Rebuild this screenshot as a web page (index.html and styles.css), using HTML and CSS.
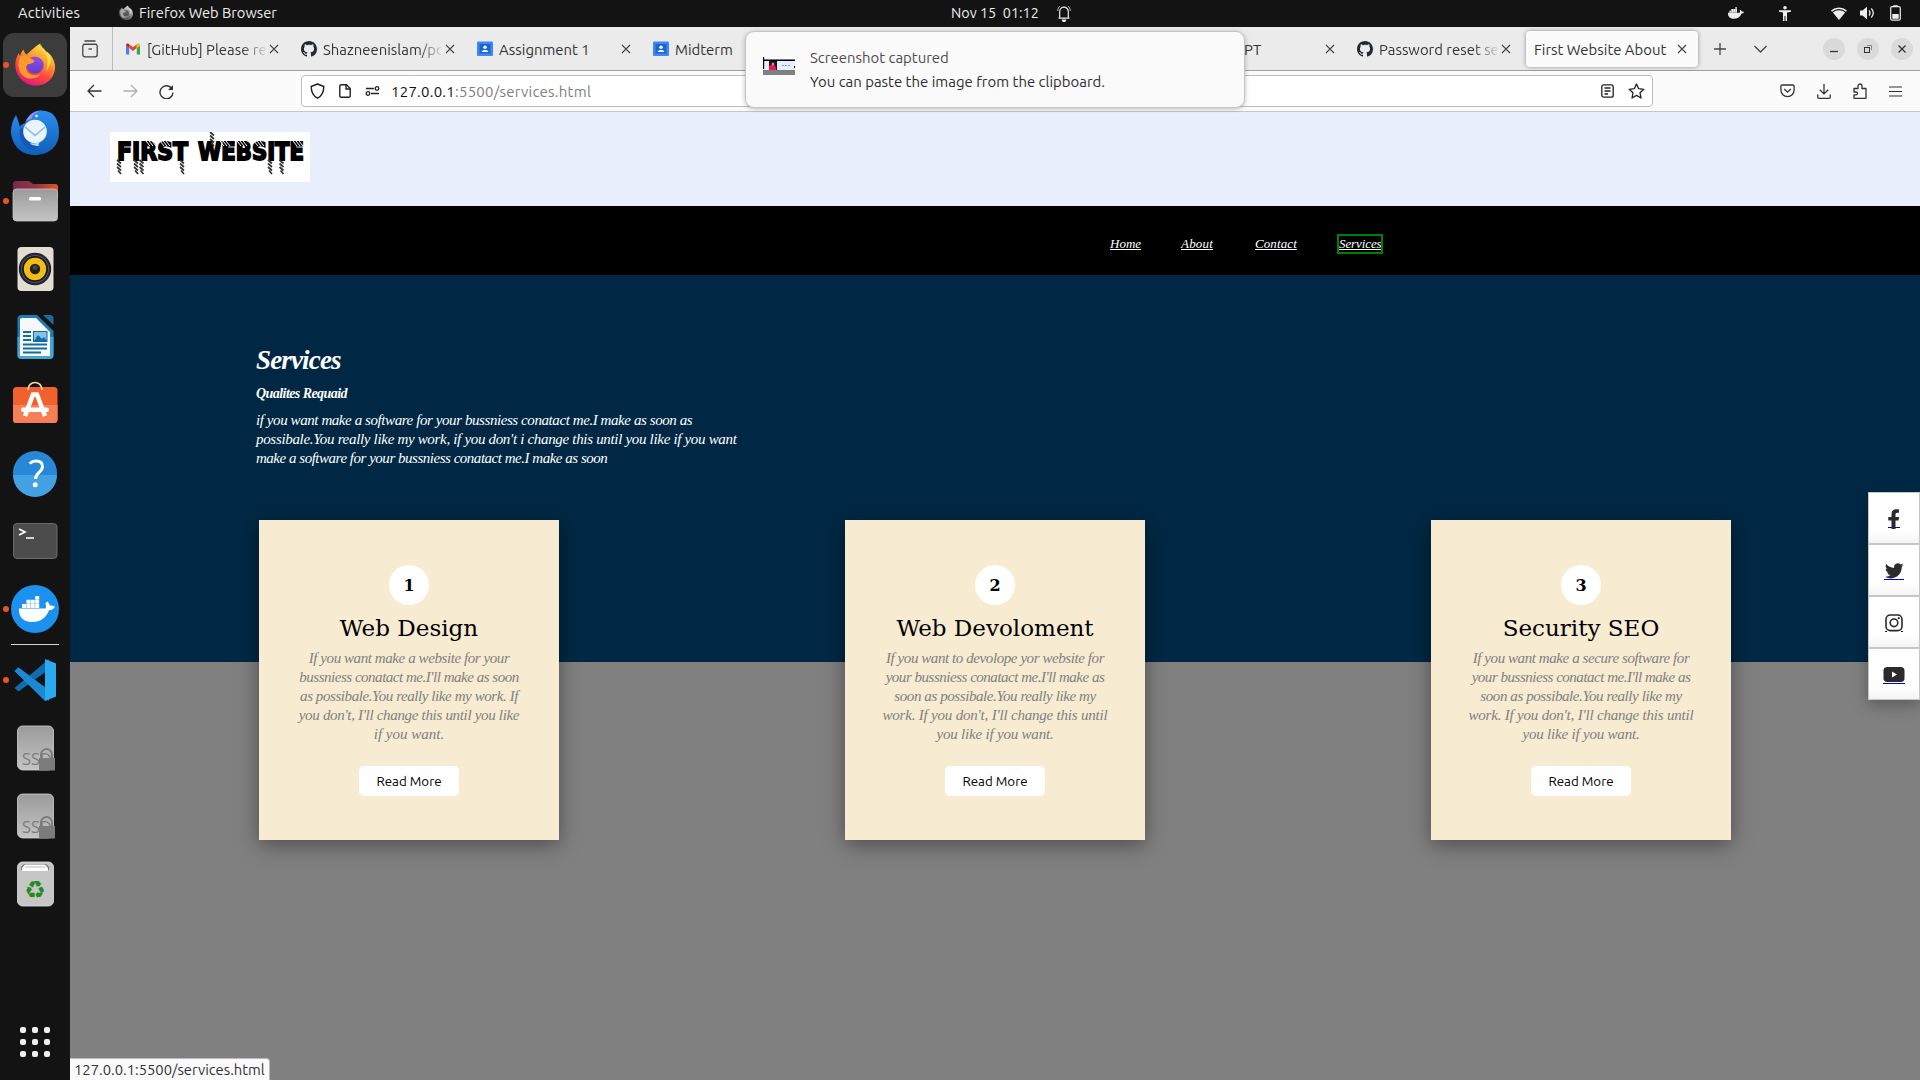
FILE: index.html
```html
<!DOCTYPE html>
<html lang="en">
<head>
<meta charset="utf-8">
<title>First Website About</title>
<link rel="stylesheet" href="styles.css">
</head>
<body>
<svg width="0" height="0" class="defs" aria-hidden="true">
  <defs>
    <linearGradient id="fx" x1=".8" y1="0" x2=".3" y2="1"><stop offset="0" stop-color="#fff04a"/><stop offset=".35" stop-color="#ffa32b"/><stop offset=".65" stop-color="#ff4a3d"/><stop offset="1" stop-color="#e3157e"/></linearGradient>
    <linearGradient id="fp" x1="0" y1="0" x2="0" y2="1"><stop offset="0" stop-color="#9a4be8"/><stop offset="1" stop-color="#5b40c8"/></linearGradient>
    <linearGradient id="tb" x1="0" y1="0" x2="0" y2="1"><stop offset="0" stop-color="#2b8df0"/><stop offset="1" stop-color="#0f5fb8"/></linearGradient>
    <linearGradient id="gr" x1="0" y1="0" x2="0" y2="1"><stop offset="0" stop-color="#9b9b9b"/><stop offset="1" stop-color="#c4c4c4"/></linearGradient>
    <linearGradient id="fold" x1="0" y1="0" x2="1" y2="0"><stop offset="0" stop-color="#742a4e"/><stop offset=".55" stop-color="#9c3540"/><stop offset="1" stop-color="#e95420"/></linearGradient>
    <symbol id="close" viewBox="0 0 10 10"><path d="M1 1l8 8M9 1L1 9" stroke="#444" stroke-width="1.1" fill="none"/></symbol>
    <symbol id="github" viewBox="0 0 16 16"><path fill="#24292f" d="M8 0C3.58 0 0 3.58 0 8c0 3.54 2.29 6.53 5.47 7.59.4.07.55-.17.55-.38 0-.19-.01-.82-.01-1.49-2.01.37-2.53-.49-2.69-.94-.09-.23-.48-.94-.82-1.13-.28-.15-.68-.52-.01-.53.63-.01 1.08.58 1.23.82.72 1.21 1.87.87 2.33.66.07-.52.28-.87.51-1.07-1.78-.2-3.64-.89-3.64-3.95 0-.87.31-1.59.82-2.15-.08-.2-.36-1.02.08-2.12 0 0 .67-.21 2.2.82A7.6 7.6 0 0 1 8 3.86c.68 0 1.36.09 2 .27 1.53-1.04 2.2-.82 2.2-.82.44 1.1.16 1.92.08 2.12.51.56.82 1.27.82 2.15 0 3.07-1.87 3.75-3.65 3.95.29.25.54.73.54 1.48 0 1.07-.01 1.93-.01 2.2 0 .21.15.46.55.38A8.01 8.01 0 0 0 16 8c0-4.42-3.58-8-8-8z"/></symbol>
    <symbol id="room" viewBox="0 0 16 16"><rect width="16" height="14.5" y=".5" rx="1" fill="#4285f4"/><rect x="2.5" y="3" width="11" height="9.5" fill="#1766d8"/><circle cx="8" cy="6.2" r="1.7" fill="#fff"/><path d="M4.7 11c.3-2.6 6.300-2.600 6.600 0z" fill="#fff"/></symbol>
    <symbol id="ssd" viewBox="0 0 48 48"><rect x="6.500" y="2" width="36" height="44" rx="5" fill="url(#gr)" stroke="#d0d0d0" stroke-width=".8"/><text x="11" y="41" class="ssd-text">SSD</text><path d="M30 34v-3.500a5.500 5.500 0 0 1 11 0V34" fill="none" stroke="#7c7c7c" stroke-width="2"/><rect x="28" y="34" width="16" height="12.500" fill="#7c7c7c"/></symbol>
    <symbol id="whale" viewBox="0 0 36 28"><path d="M0 12.500h26.500c.8-1.300 .8-3-.2-5l2-2c1.500 1.200 2.300 2.700 2.500 4.200 1.800-.3 3.500 0 5.200 1-1.200 2.300-3.200 3.400-6 3.600C27.500 21.500 22 26 13 26 5 26-.5 22 0 12.500zM3 8h4v4H3zM7.400 8h4v4h-4zM11.800 8h4v4h-4zM16.200 8h4v4h-4zM7.400 3.700h4v4h-4zM11.800 3.700h4v4h-4zM16.200 3.700h4v4h-4zM16.200 0h4v3.400h-4z"/></symbol>
    <symbol id="fox" viewBox="0 0 48 48"><path fill="url(#fx)" d="M3.500 24c0-6 2-9 3.500-12.500.4 1.500.8 2.500 1.500 3 .5-2.500 1.500-4.700 3.700-6.800.3 2.600 1.500 4.300 3 5.300C19 10 24 4.500 29.500 1.500c.3 5 4 6.500 6 11 .5-1 .5-1.500.5-2.500C41 13 45 20 45 26 45 37 36.500 45.500 25 45.500S3.500 36 3.500 24z"/><path fill="#ffe14d" d="M30 2c-.5 5 3.500 7 6 12 1.500 4 2 11-1 17 8-10 6-18 1-20.500-2-3.500-5-4.500-6-8.500z"/><circle cx="24" cy="24" r="9" fill="url(#fp)"/><path fill="#ff9b2b" d="M9 15c3-1 6-1 8 1l6 3c1 2-3 4-6 4-3 2-3 5-1 8 3 4 9 5 14 2-5 7-17 7-21-1-3-5-3-12 0-17z"/></symbol>
    <path id="drip" d="M-2 0l4 3.500M-2 3.500l4 3.500M-2 7l4 3.500M-1 10.500l3 3.500"/>
    <path id="hatch" d="M0 0l4 5M3 0l4 5M6 0l4 5"/>
  </defs>
</svg>

<header class="topbar">
  <span class="ui activities">Activities</span>
  <div class="app-name"><svg class="app-fox" viewBox="0 0 48 48"><use href="#fox"/></svg><span class="ui firefox">Firefox Web Browser</span></div>
  <div class="clock"><span class="ui time">Nov 15&nbsp; 01:12</span><svg width="14" height="17" viewBox="0 0 14 17" fill="none" stroke="#ededed" stroke-width="1.200"><path d="M1.500 13.200h11M2.700 13V6.500a4.300 4.300 0 0 1 8.600 0V13"/><path d="M.7 6c0-2 .7-3.500 2.200-4.800M13.300 6c0-2-.7-3.500-2.200-4.800" stroke-width=".8"/><path d="M5.500 15a1.500 1.500 0 0 0 3 0z" fill="#ededed"/></svg></div>
  <div class="tray">
    <svg class="t-docker" width="16" height="13" fill="#ededed"><use href="#whale"/></svg>
    <svg class="t-access" width="12" height="15" viewBox="0 0 12 15" fill="#ededed"><circle cx="6" cy="1.800" r="1.800"/><path d="M0 4.200h12v1.600L8 6.400V15H6.500v-5h-1v5H4V6.400L0 5.800z"/></svg>
    <svg class="t-wifi" width="16" height="13" viewBox="0 0 16 13"><path d="M0 3.500a12 12 0 0 1 16 0l-1 1.200a10.500 10.500 0 0 0-14 0z" fill="#ededed"/><path d="M1.800 5.600a9.500 9.500 0 0 1 12.400 0L8 13z" fill="#ededed"/></svg>
    <svg class="t-vol" width="15" height="14" viewBox="0 0 15 14"><path d="M0 4.500h2.500L7 .7v12.600L2.500 9.500H0z" fill="#ededed"/><path d="M9 4.500q2 2.500 0 5M11.300 2.500q4 4.500 0 9" fill="none" stroke="#ededed" stroke-width="1.300"/></svg>
    <svg class="t-bat" width="11" height="16" viewBox="0 0 11 16"><path d="M3.500 1.500V.7h4v.8" fill="none" stroke="#ededed"/><rect x=".7" y="1.700" width="9.600" height="13.500" rx="1.500" fill="none" stroke="#ededed" stroke-width="1.200"/><path d="M2.300 9h6.400v4.800H2.300z" fill="#ededed"/></svg>
  </div>
</header>

<div class="desktop">
  <nav class="dock">
    <div class="slot running active"><svg viewBox="0 0 48 48"><use href="#fox"/></svg></div>
    <div class="slot"><svg viewBox="0 0 48 48"><path fill="url(#tb)" d="M5 6C1 12-1 20 .5 27 3 39 12 46 24 46c14 0 24-9 24-22 0-10-3-17-8-20-5-3-15-4-20 1-3 3-5 6-6 9-3 1-4 2-5 4-1-4-2-7-4-12z"/><path fill="#1558b5" d="M12 18c0 10 4 17 16 19-2 2-5 3-8 3C12 38 7 30 9 20z"/><path fill="#a58ef5" d="M15 12C17 7 22 3 28 2c-2 2-7 3-7 7-1 1-3 2-6 3z"/><circle cx="25.500" cy="7" r="1.300" fill="#fff"/><circle cx="24" cy="22.500" r="11.800" fill="#e9f4ff"/><path d="M19 34c4 1 8 0 10-1-2 2-2 4 0 4-4 0-8 0-10-3z" fill="#b9ddfb"/><path d="M14 18l10 8.500L34 18" fill="none" stroke="#85b9ec" stroke-width="1.600"/></svg></div>
    <div class="slot running"><svg viewBox="0 0 48 48"><path d="M2 7a3 3 0 0 1 3-3h13l4 3h22a3 3 0 0 1 3 3v10H2z" fill="url(#fold)"/><rect x="2" y="12" width="44.500" height="32" rx="3.500" fill="url(#gr)" stroke="#c4c4c4" stroke-width=".8"/><rect x="18" y="20" width="12" height="3.500" rx="1.500" fill="#fff"/></svg></div>
    <div class="slot"><svg viewBox="0 0 48 48"><rect x="6.500" y="2" width="36" height="44" rx="4" fill="#e2ded4"/><circle cx="24" cy="24" r="16.200" fill="#24242e"/><circle cx="24" cy="24" r="14" fill="#555565"/><circle cx="24" cy="24" r="13" fill="#17171c"/><circle cx="24" cy="24" r="11.200" fill="#f0bd16"/><circle cx="24" cy="24" r="5.200" fill="#202020"/><circle cx="24" cy="22.500" r="2.500" fill="#444"/></svg></div>
    <div class="slot"><svg viewBox="0 0 48 48"><path d="M10 2h16l16.500 16v24a4 4 0 0 1-4 4h-28a4 4 0 0 1-4-4V6a4 4 0 0 1 3.500-4z" fill="#1b7db5"/><path d="M6.500 24h36v18a4 4 0 0 1-4 4h-28a4 4 0 0 1-4-4z" fill="#45a4d3"/><path d="M11 5h14l14 14v24H9V7a2 2 0 0 1 2-2z" fill="#f8f8f8"/><path d="M32 2h7a3.500 3.500 0 0 1 3.500 3.500V12z" fill="#1a6d9c"/><path d="M12 19h8M12 23h8M12 27h8M12 31.500h24M12 35.500h24M12 39.500h18" stroke="#116ba1" stroke-width="1.800"/><rect x="22.500" y="18.500" width="13.500" height="10" fill="#7fc4e8" stroke="#116ba1"/><path d="M23 28l4-6 4 4 2-2 3 4z" fill="#116ba1"/></svg></div>
    <div class="slot"><svg class="software" viewBox="0 0 48 48"><rect x="2" y="8" width="44.500" height="36" rx="3.500" fill="#f0612e"/><path d="M2 26h44.500v14.500a3.500 3.500 0 0 1-3.500 3.500H5.500A3.500 3.500 0 0 1 2 40.500z" fill="#f58055"/><path d="M17 11c0-10 14-10 14 0" fill="none" stroke="#f6d9a6" stroke-width="1.700"/><path d="M14 37l8-21.500h4L34 37" fill="none" stroke="#fff" stroke-width="4.500"/><rect x="10" y="28.500" width="28" height="4.500" rx="2.200" fill="#fff"/></svg></div>
    <div class="slot"><svg class="help" viewBox="0 0 48 48"><circle cx="24" cy="24" r="22" fill="#2688d6"/><path d="M2 26a22 22 0 0 0 44 0z" fill="#43a2e3"/><path d="M18.500 14.500c2-1.800 4-2.500 6.500-2.500 4 0 6.500 2 6.500 5.500 0 6-7 6-7 12.500" fill="none" stroke="#fff" stroke-width="3"/><circle cx="24.200" cy="35.700" r="2.500" fill="#fff"/></svg></div>
    <div class="slot"><svg viewBox="0 0 48 48"><rect x="2.500" y="6.500" width="43.500" height="35" rx="3.500" fill="#4c4c4c" stroke="#6a6a6a" stroke-width="1"/><path d="M8 12l6 3-6 3M15 21h8" fill="none" stroke="#fff" stroke-width="1.700"/></svg></div>
    <div class="slot running"><svg viewBox="0 0 48 48"><circle cx="24" cy="24" r="24" fill="#1d91ef"/><svg x="8" y="11" width="36" height="28" fill="#fff"><use href="#whale"/></svg></svg></div>
    <div class="divider"></div>
    <div class="slot running"><svg viewBox="0 0 48 48"><path d="M3.500 15l4-3.500L38 34v11z" fill="#1580c8"/><path d="M3.500 32l4 3.500L38 13.500V3z" fill="#0f6cb0"/><path d="M34 3l11 4.500v33L34 45z" fill="#29aaf2"/><path d="M3.500 15l4-3.500L34 32v13z" fill="#1b8ad3"/></svg></div>
    <div class="slot"><svg><use href="#ssd"/></svg></div>
    <div class="slot"><svg><use href="#ssd"/></svg></div>
    <div class="slot"><svg viewBox="0 0 48 48"><rect x="6.500" y="2" width="36" height="44" rx="5" fill="#c6c6c6" stroke="#e2e2e2" stroke-width=".8"/><path d="M10 10V7l3-3h22l3 3v3z" fill="#777"/><path d="M11 11V8l3-3.500h20L37 8v3z" fill="#fff"/><path d="M14 7h20" stroke="#aaa" stroke-width=".8"/><text x="24" y="38" class="recycle">♻</text></svg></div>
    <div class="apps"><i></i><i></i><i></i><i></i><i></i><i></i><i></i><i></i><i></i></div>
  </nav>

  <main class="browser">
    <div class="tabstrip">
      <div class="view"><svg width="16" height="18" viewBox="0 0 16 18" fill="none" stroke="#444" stroke-width="1.300"><path d="M2.500 1h11M1 4.300h14"/><rect x=".8" y="4.300" width="14.400" height="12.500" rx="2"/><path d="M6.500 9h3.500"/></svg></div>
      <div class="tabs">
        <div class="tab"><svg class="fav" viewBox="0 0 16 16"><path d="M1 13.500h3.200V7L1 4.500z" fill="#4285f4"/><path d="M11.800 13.500H15v-9L11.800 7z" fill="#34a853"/><path d="M4.200 7V3.300L8 6.200l3.800-2.900V7L8 10z" fill="#ea4335"/><path d="M1 4.500V4c0-1.500 1.500-2 2.500-1.200l.7.500V7z" fill="#c5221f"/><path d="M15 4.500V4c0-1.500-1.500-2-2.500-1.200l-.7.500V7z" fill="#fbbc04"/></svg><span class="ui label fade">[GitHub] Please re</span><svg class="x"><use href="#close"/></svg></div>
        <div class="tab"><svg class="fav"><use href="#github"/></svg><span class="ui label fade">Shazneenislam/po</span><svg class="x"><use href="#close"/></svg></div>
        <div class="tab"><svg class="fav"><use href="#room"/></svg><span class="ui label">Assignment 1</span><svg class="x"><use href="#close"/></svg></div>
        <div class="tab"><svg class="fav"><use href="#room"/></svg><span class="ui label">Midterm</span></div>
        <div class="tab"></div>
        <div class="tab"></div>
        <div class="tab"><span class="fav"></span><span class="ui label">ChatGPT</span><svg class="x"><use href="#close"/></svg></div>
        <div class="tab"><svg class="fav"><use href="#github"/></svg><span class="ui label fade">Password reset se</span><svg class="x"><use href="#close"/></svg></div>
        <div class="tab current"><span class="ui label">First Website About</span><svg class="x"><use href="#close"/></svg></div>
      </div>
      <svg class="plus" width="12" height="12" viewBox="0 0 12 12" stroke="#444" stroke-width="1.300"><path d="M6 0v12M0 6h12"/></svg>
      <svg class="chev" width="13" height="8" viewBox="0 0 13 8" fill="none" stroke="#444" stroke-width="1.300"><path d="M.5 1l6 6 6-6"/></svg>
      <div class="winbtns">
        <span><svg viewBox="0 0 10 10"><path d="M1 7.500h8" stroke="#333" stroke-width="1.300"/></svg></span>
        <span><svg viewBox="0 0 10 10" fill="none" stroke="#333"><rect x="1.500" y="3.500" width="5" height="5"/><path d="M4 1.500h4.500V6" stroke="#888"/></svg></span>
        <span><svg viewBox="0 0 10 10"><path d="M1.500 1.500l7 7M8.500 1.500l-7 7" stroke="#333" stroke-width="1.300"/></svg></span>
      </div>
    </div>

    <div class="toolbar">
      <div class="navbtns">
        <svg width="15" height="14" viewBox="0 0 15 14" fill="none" stroke="#333" stroke-width="1.300"><path d="M14.500 7H1.200M7 1L1 7l6 6"/></svg>
        <svg width="15" height="14" viewBox="0 0 15 14" fill="none" stroke="#b0b0b0" stroke-width="1.300"><path d="M.5 7h13.300M8 1l6 6-6 6"/></svg>
        <svg width="15" height="15" viewBox="0 0 15 15" fill="none" stroke="#333" stroke-width="1.400"><path d="M12.800 4.500A6.500 6.500 0 1 0 14 8.500"/><path d="M14 1v5H9z" fill="#333" stroke="none"/></svg>
      </div>
      <div class="urlbar">
        <svg width="15" height="16" viewBox="0 0 15 16" fill="none" stroke="#222" stroke-width="1.400"><path d="M7.500 1l6.300 2.500c0 6-2 9.500-6.300 11.700C3.200 13 1.200 9.500 1.200 3.500z" stroke-linejoin="round"/></svg>
        <svg width="12" height="14" viewBox="0 0 12 14" fill="none" stroke="#222" stroke-width="1.400"><path d="M.8 2A1.200 1.200 0 0 1 2 .8h5.500l3.700 3.700V12a1.200 1.200 0 0 1-1.200 1.200H2A1.200 1.200 0 0 1 .8 12z"/><path d="M7 1v4h4"/></svg>
        <svg width="15" height="10" viewBox="0 0 15 10" fill="none" stroke="#222" stroke-width="1.300"><path d="M1 2.500h8M6 7.500h8"/><circle cx="12" cy="2.500" r="1.800"/><circle cx="3" cy="7.500" r="1.800"/></svg>
        <span class="ui url"><b>127.0.0.1</b>:5500/services.html</span>
        <svg class="reader" width="13" height="14" viewBox="0 0 13 14" fill="none" stroke="#222" stroke-width="1.300"><rect x=".8" y=".8" width="11.400" height="12.400" rx="2"/><path d="M3.500 4h6M3.500 7h6M3.500 10h3.500"/></svg>
        <svg width="17" height="16" viewBox="0 0 17 16" fill="none" stroke="#222" stroke-width="1.300" stroke-linejoin="round"><path d="M8.500 1l2.200 4.700 5.100.6-3.800 3.500 1 5.200-4.500-2.600L4 15l1-5.200L1.200 6.300l5.100-.6z"/></svg>
      </div>
      <div class="tools">
        <svg width="15" height="14" viewBox="0 0 15 14" fill="none" stroke="#333" stroke-width="1.300"><path d="M2.200 1h10.600c.8 0 1.300.5 1.300 1.300V6a6.600 6.600 0 0 1-13.200 0V2.300C.9 1.500 1.400 1 2.200 1zM4.300 5l3.200 3.200L10.700 5"/></svg>
        <svg width="14" height="15" viewBox="0 0 14 15" fill="none" stroke="#333" stroke-width="1.300"><path d="M7 0v9.500M2.800 5.700L7 9.900l4.200-4.200M.7 10.500v2.200c0 1 .6 1.600 1.600 1.600h9.400c1 0 1.600-.6 1.600-1.600v-2.200"/></svg>
        <svg width="14" height="16" viewBox="0 0 14 16" fill="none" stroke="#333" stroke-width="1.300" stroke-linejoin="round"><path d="M1 9V5.500h4V3a2 2 0 0 1 4 0v2.500h4v9.800H1v-3.500h2a1.500 1.500 0 0 0 0-3z"/></svg>
        <svg width="13" height="11" viewBox="0 0 13 11" stroke="#333" stroke-width="1.200"><path d="M0 1h13M0 5.500h13M0 10h13"/></svg>
      </div>
    </div>

    <div class="page">
      <div class="brand">
        <svg class="logo" width="200" height="50" viewBox="0 0 200 50"><text x="7" y="27.500" textLength="71" lengthAdjust="spacingAndGlyphs">FIRST</text><text x="88" y="27.500" textLength="106" lengthAdjust="spacingAndGlyphs">WEBSITE</text>
          <g class="drip"><use href="#drip" x="9" y="28"/><use href="#drip" x="26" y="28"/><use href="#drip" x="31.500" y="28"/><use href="#drip" x="72" y="28"/><use href="#drip" x="160" y="28"/><use href="#drip" x="171.500" y="28"/><use href="#drip" x="102" y="0"/></g>
          <g class="hatch"><use href="#hatch" x="36" y="9"/><use href="#hatch" x="50" y="9"/><use href="#hatch" x="110" y="9"/><use href="#hatch" x="127" y="9"/><use href="#hatch" x="144" y="9"/><use href="#hatch" x="183" y="9"/></g></svg>
      </div>
      <nav class="menu">
        <a class="script m1">Home</a><a class="script m2">About</a><a class="script m3">Contact</a><a class="script m4">Services</a>
      </nav>
      <section class="hero">
        <div class="intro">
          <h1 class="script">Services</h1>
          <h4 class="script">Qualites Requaid</h4>
          <p class="script"><span class="k4">if you want make a software for your bussniess conatact me.I make as soon as</span><br><span class="k3">possibale.You really like my work, if you don't i change this until you like if you want</span><br><span class="k5">make a software for your bussniess conatact me.I make as soon</span></p>
        </div>
        <div class="cards">
          <article class="card"><div class="num">1</div><h2>Web Design</h2><p class="script"><span class="k4">If you want make a website for your</span><br><span class="k5">bussniess conatact me.I'll make as soon</span><br><span class="k4">as possibale.You really like my work. If</span><br><span class="k3">you don't, I'll change this until you like</span><br><span class="k1">if you want.</span></p><button class="ui">Read More</button></article>
          <article class="card"><div class="num">2</div><h2>Web Devoloment</h2><p class="script"><span class="k4">If you want to devolope yor website for</span><br><span class="k5">your bussniess conatact me.I'll make as</span><br><span class="k4">soon as possibale.You really like my</span><br><span class="k2">work. If you don't, I'll change this until</span><br><span class="k2">you like if you want.</span></p><button class="ui">Read More</button></article>
          <article class="card"><div class="num">3</div><h2>Security SEO</h2><p class="script"><span class="k4">If you want make a secure software for</span><br><span class="k5">your bussniess conatact me.I'll make as</span><br><span class="k4">soon as possibale.You really like my</span><br><span class="k2">work. If you don't, I'll change this until</span><br><span class="k2">you like if you want.</span></p><button class="ui">Read More</button></article>
        </div>
      </section>
    </div>
  </main>
</div>

<aside class="social">
  <a><svg width="12" height="20" viewBox="0 0 12 20"><path d="M0 18.500h12" class="ul"/><path d="M3.500 20v-8.500H.3V8h3.200V5.200C3.500 2 5.300.3 8.200.3c1.400 0 2.800.2 2.800.2v3.200H9.500C8 3.700 7.500 4.600 7.500 5.600V8h3.600l-.6 3.500h-3V20z"/></svg></a>
  <a><svg width="20" height="20" viewBox="0 0 20 20"><path d="M0 18.500h20" class="ul"/><path transform="translate(1 0) scale(1.160)" d="M5.030 15c6.040 0 9.340-5 9.340-9.340l-.01-.42A6.700 6.700 0 0 0 16 3.540a6.600 6.600 0 0 1-1.890.52 3.300 3.300 0 0 0 1.450-1.820 6.500 6.500 0 0 1-2.090.79A3.280 3.280 0 0 0 7.880 6 9.300 9.300 0 0 1 1.110 2.600a3.300 3.300 0 0 0 1.020 4.380A3.200 3.200 0 0 1 .64 6.570v.05a3.300 3.300 0 0 0 2.640 3.210 3.200 3.200 0 0 1-.87.12 3 3 0 0 1-.62-.06 3.290 3.290 0 0 0 3.070 2.280A6.600 6.600 0 0 1 .78 13.580 6 6 0 0 1 0 13.530 9.300 9.300 0 0 0 5.030 15"/></svg></a>
  <a><svg width="18" height="18" viewBox="0 0 18 18"><path d="M0 17.500h2M16 17.500h2" class="ul"/><rect x="1" y="1" width="16" height="15.600" rx="4.300" fill="none" stroke="#2b2b2b" stroke-width="1.600"/><circle cx="9" cy="8.800" r="3.800" fill="none" stroke="#2b2b2b" stroke-width="1.600"/><circle cx="13.700" cy="4.200" r="1.100"/></svg></a>
  <a><svg width="22" height="18" viewBox="0 0 22 18"><path d="M0 17.500h22" class="ul"/><rect x=".5" y="1" width="21" height="15" rx="3.800"/><path d="M9 5.500v6l5-3z" fill="#fff"/></svg></a>
</aside>

<div class="notice">
  <svg width="32" height="18" viewBox="0 0 32 18"><rect width="32" height="18" fill="#e8eefb"/><path d="M0 0h32v2H0z" fill="#fff"/><path d="M0 2.500h32v1.500H0zM0 0h1.200v12H0z" fill="#000"/><path d="M0 13h32v5H0z" fill="#808080"/><path d="M6 4h8v9H6z" fill="#17171c"/><path d="M6 9l4-2 3 3v3H6z" fill="#e6195c"/><circle cx="10" cy="7" r="1.500" fill="#c98b6b"/><path d="M19 8.500h8" stroke="#999" stroke-dasharray="2 1"/><path d="M31 9h1v2h-1z"/></svg>
  <div class="notice-text"><span class="ui n1">Screenshot captured</span><span class="ui n2">You can paste the image from the clipboard.</span></div>
</div>
<div class="status"><span class="ui">127.0.0.1:5500/services.html</span></div>
</body>
</html>
```
FILE: styles.css
```css
* { box-sizing: border-box; }
body { margin: 0; width: 1920px; height: 1080px; overflow: hidden; position: relative; background: #131313; display: flex; flex-direction: column; }
.defs { position: absolute; }
svg { display: block; flex: none; }
.ui { font-family: Ubuntu, "Noto Sans", sans-serif; font-size: 14.67px; white-space: nowrap; line-height: 20px; }
.script { font-family: "Z003", "URW Chancery L", "Liberation Serif", serif; font-style: italic; white-space: nowrap; }
.k1 { letter-spacing: 0; }
.k2 { letter-spacing: -.2px; }
.k3 { letter-spacing: -.32px; }
.k4 { letter-spacing: -.42px; }
.k5 { letter-spacing: -.48px; }

.topbar { height: 27px; display: grid; grid-template-columns: 118px 833px 700px auto; align-items: center; color: #ededed; flex: none; padding-bottom: 1px; }
.activities { padding-left: 18px; letter-spacing: .2px; }
.app-name, .clock, .tray { display: flex; align-items: center; }
.app-fox { width: 16px; height: 16px; filter: grayscale(1); margin-right: 5px; }
.time { width: 106px; font-size: 14.400px; }
.tray { padding-left: 77px; }
.t-access { margin-left: 35px; }
.t-wifi { margin-left: 40px; }
.t-vol { margin-left: 13px; }
.t-bat { margin-left: 15px; }

.desktop { flex: 1; display: flex; min-height: 0; }
.dock { width: 70px; flex: none; padding-top: 4px; display: flex; flex-direction: column; align-items: center; }
.slot { width: 70px; height: 68px; flex: none; display: grid; place-items: center; position: relative; }
.slot > svg { width: 48px; height: 48px; }
.slot > .software { margin-top: -4px; }
.slot > .help { margin-top: -1px; }
.slot.active::before { content: ""; position: absolute; left: 3px; top: 2px; width: 64px; height: 64px; border-radius: 11px; background: #3c3c3c; }
.slot.active > svg { width: 46px; height: 46px; position: relative; }
.slot.running::after { content: ""; position: absolute; left: 3px; top: 31px; width: 6px; height: 6px; border-radius: 50%; background: #e95420; }
.divider { width: 48px; height: 1px; background: #d6d6d6; margin: 1px 0; flex: none; }
.ssd-text { font: 17px Ubuntu, "Noto Sans", sans-serif; fill: #7c7c7c; }
.recycle { font: 24px "DejaVu Sans", sans-serif; fill: #238a1c; text-anchor: middle; }
.apps { margin-top: auto; margin-bottom: 23px; display: grid; grid-template-columns: repeat(3, 6px); gap: 6px; }
.apps i { width: 6px; height: 6px; border-radius: 2px; background: #f0f0f0; }

.browser { flex: 1; display: flex; flex-direction: column; min-width: 0; }
.tabstrip { height: 44px; flex: none; background: #ebebeb; border-bottom: 1px solid #9f9fa2; display: flex; align-items: center; color: #333; }
.view { width: 43px; align-self: stretch; border-right: 1px solid #bcbcbc; display: grid; place-items: center; padding-right: 3px; }
.tabs { display: flex; padding-left: 5px; }
.tab { width: 176px; height: 36px; display: flex; align-items: center; padding-left: 7px; }
.tab.current { width: 172px; background: #fbfbfb; border-radius: 4px; box-shadow: 0 0 4px rgba(0,0,0,.4); padding-left: 8px; }
.fav { width: 16px; height: 16px; margin-right: 6px; flex: none; }
.label { width: 118px; overflow: hidden; margin-top: 2px; font-size: 14.900px; }
.current .label { width: 139px; }
.fade { -webkit-mask-image: linear-gradient(90deg, #000 80%, rgba(0,0,0,.15)); mask-image: linear-gradient(90deg, #000 80%, rgba(0,0,0,.15)); }
.x { width: 10px; height: 10px; margin-left: 4px; }
.plus { margin-left: 16px; }
.chev { margin-left: 28px; }
.winbtns { display: flex; gap: 12px; margin-left: 56px; }
.winbtns span { width: 22px; height: 22px; border-radius: 50%; background: #dadada; display: grid; place-items: center; }
.winbtns svg { width: 10px; height: 10px; }

.toolbar { height: 41px; flex: none; background: #fbfbfb; border-bottom: 1px solid #c6c6c8; display: flex; align-items: center; }
.navbtns { width: 231px; padding-left: 17px; display: flex; align-items: center; gap: 21px; }
.urlbar { width: 1352px; height: 32px; border: 1px solid #bdbdbf; border-radius: 4px; background: #fff; display: flex; align-items: center; gap: 14px; padding: 0 7px 0 8px; }
.url { color: #808080; margin-left: -3px; margin-top: 1px; font-size: 15px; letter-spacing: .24px; }
.url b { color: #111; font-weight: 400; }
.reader { margin-left: auto; }
.tools { display: flex; align-items: center; margin-left: 127px; gap: 22px; }

.page { flex: 1; background: #808080; min-height: 0; }
.brand { height: 94px; background: #e8eefb; padding: 20px 40px; }
.logo { background: #fff; }
.logo text { font: bold 24px "DejaVu Sans", sans-serif; stroke: #000; stroke-width: 1.800; }
.drip { stroke: #333; stroke-width: 1.700; fill: none; }
.hatch { stroke: #fff; stroke-width: 1; fill: none; }
.menu { height: 69px; background: #000; color: #fff; display: flex; align-items: center; padding: 0 0 0 1040px; gap: 40px; }
.menu a { font-size: 13px; line-height: 16px; text-decoration: underline; height: 16px; margin-top: 6px; }
.m1 { width: 31px; } .m2 { width: 34px; letter-spacing: .2px; } .m3 { width: 42px; letter-spacing: .1px; }
.menu .m4 { outline: 2px solid #008000; width: 42px; margin-left: 2px; letter-spacing: -.1px; }
.hero { height: 387px; background: #002844; }
.intro { height: 245px; padding: 67px 0 0 186px; color: #fff; }
.intro h1 { margin: 0; font-size: 27px; line-height: 36px; letter-spacing: -.85px; }
.intro h4 { margin: 6px 0 0; font-size: 14px; line-height: 20px; letter-spacing: -.56px; }
.intro p { margin: 7px 0 0; font-size: 15px; line-height: 19px; }
.cards { display: flex; justify-content: space-between; padding: 0 189px; }
.card { width: 300px; height: 320px; background: #f7ebd1; box-shadow: 0 5px 20px rgba(0,0,0,.4); display: flex; flex-direction: column; align-items: center; padding-top: 45px; }
.num { width: 40px; height: 40px; border-radius: 50%; background: #fff; font: bold 16px/41px "DejaVu Serif", serif; text-align: center; }
.card h2 { margin: 8px 0 0; font: 23.040px/30px "DejaVu Serif", serif; white-space: nowrap; }
.card p { margin: 6px 0 0; color: #808080; font-size: 15px; line-height: 19px; text-align: center; }
.card button { width: 100px; height: 30px; margin-top: 22px; border: 0; border-radius: 5px; background: #fff; color: #000; font-size: 13.330px; padding: 1px 0 0; }

.social { position: absolute; left: 1868px; top: 492px; width: 52px; box-shadow: 0 5px 15px rgba(0,0,0,.3); }
.social a { height: 52px; border: 1px solid #c6c6c8; background: linear-gradient(#fff 75%, #f4f4f4); display: grid; place-items: center; padding-top: 1px; }
.social svg { fill: #2b2b2b; }
.social .ul { stroke: #0000ee; stroke-width: 1; }
.notice { position: absolute; left: 745px; top: 31px; width: 500px; height: 77px; border: 1px solid #c4c4c4; border-radius: 9px; background: #fafafa; box-shadow: 0 1px 5px rgba(0,0,0,.25); display: flex; align-items: center; padding: 0 17px; gap: 15px; }
.notice > svg { margin-top: -8px; }
.notice-text { display: flex; flex-direction: column; gap: 4px; margin-top: 1px; color: #2e2e2e; }
.notice-text .ui { font-size: 14.950px; }
.notice-text .n1 { color: #4c4c4c; }
.status { position: absolute; left: 70px; top: 1058px; width: 200px; height: 22px; background: #fafafa; border: 1px solid #bbb; border-left: 0; border-bottom: 0; border-radius: 0 4px 0 0; padding: 1px 4px; color: #333; }
.status .ui { font-size: 14.800px; }
```
